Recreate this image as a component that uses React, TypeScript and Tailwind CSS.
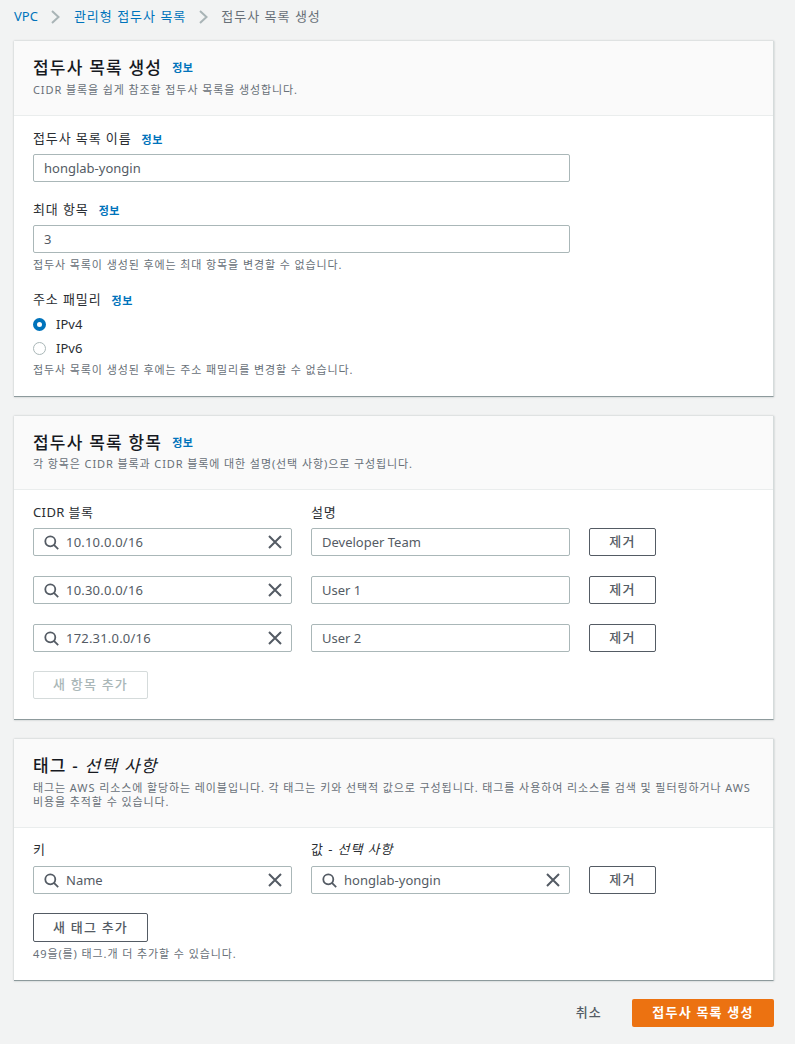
import React from "react";

const font = { fontFamily: '"Noto Sans", "Noto Sans CJK KR", sans-serif' };

function Info({ className = "" }: { className?: string }) {
  return <span className={`text-[11px] font-bold text-[#0073bb] leading-none tracking-[0.5px] ${className}`}>정보</span>;
}

function SearchIcon() {
  return (
    <svg width="15" height="15" viewBox="0 0 15 15" fill="none" stroke="#545b64" strokeWidth="1.8" className="shrink-0">
      <circle cx="6.3" cy="6.3" r="5" />
      <path d="M9.9 9.9 L14.2 14.2" />
    </svg>
  );
}

function XIcon() {
  return (
    <svg width="14" height="14" viewBox="0 0 14 14" fill="none" stroke="#545b64" strokeWidth="2" className="shrink-0">
      <path d="M1 1 L13 13 M13 1 L1 13" />
    </svg>
  );
}

function Chevron() {
  return (
    <svg width="9" height="14" viewBox="0 0 9 14" fill="none" stroke="#a9b4b6" strokeWidth="2" className="shrink-0">
      <path d="M1 1 L7.5 7 L1 13" />
    </svg>
  );
}

function TextInput({ value, className = "" }: { value: string; className?: string }) {
  return (
    <div className={`h-7 flex items-center border border-[#aab7b8] rounded-[2px] bg-white px-[10px] pt-[1px] text-[13px] text-[#545b64] ${className}`}>
      {value}
    </div>
  );
}

function SearchInput({ value, numeric }: { value: string; numeric?: boolean }) {
  return (
    <div className={`w-[259px] h-7 flex items-center border border-[#aab7b8] rounded-[2px] bg-white pl-[10px] pr-[9px] text-[13px] text-[#545b64] ${numeric ? "tracking-[0.2px]" : ""}`}>
      <SearchIcon />
      <span className="ml-[7px] flex-1 pt-[1px]">{value}</span>
      <XIcon />
    </div>
  );
}

function RemoveButton() {
  return (
    <button className="w-[67px] h-7 border border-[#545b64] rounded-[2px] bg-white text-[13px] font-medium text-[#545b64] tracking-[1.2px] flex items-center justify-center">
      제거
    </button>
  );
}

function CardHeader({ children, sub, tall }: { children: React.ReactNode; sub: React.ReactNode; tall?: boolean }) {
  return (
    <div className="bg-[#fafafa] border-b border-[#eaeded] px-[19px] pt-[15px] pb-[18px]">
      <div className="flex items-center h-[23px] text-[17px] font-medium text-[#16191f] tracking-[1.2px] leading-none">{children}</div>
      <div className={`${tall ? "mt-[4px]" : "mt-[3px]"} text-[11px] leading-[14px] text-[#687078] tracking-[0.9px]`}>{sub}</div>
    </div>
  );
}

function Card({ children }: { children: React.ReactNode }) {
  return (
    <section className="ml-[14px] w-[760px] bg-white border-r border-[#d5dbdb] border-b border-b-[#8d9a9c] shadow-[0_0_2px_rgba(0,28,36,0.25)]">
      {children}
    </section>
  );
}

function Label({ children }: { children: React.ReactNode }) {
  return <div className="flex items-center h-[20px] text-[13px] text-[#2a2e33] tracking-[0.9px]">{children}</div>;
}

function Hint({ children }: { children: React.ReactNode }) {
  return <div className="text-[11px] leading-[14px] text-[#687078] tracking-[0.9px]">{children}</div>;
}

function Radio({ checked, label }: { checked?: boolean; label: string }) {
  return (
    <div className="flex items-center h-[24px]">
      {checked ? (
        <span className="w-[13px] h-[13px] rounded-full border-[4px] border-[#0073bb] bg-white" />
      ) : (
        <span className="w-[13px] h-[13px] rounded-full border border-[#aab7b8] bg-white" />
      )}
      <span className="ml-[10px] pt-[1px] text-[13px] text-[#2a2e33]">{label}</span>
    </div>
  );
}

export default function App() {
  return (
    <div style={font} className="w-[795px] h-[1044px] overflow-hidden bg-[#f2f3f3]">
      <nav className="h-[41px] pl-[14px] pb-[8px] flex items-center text-[13px] tracking-[1px]">
        <span className="text-[#0073bb] tracking-normal">VPC</span>
        <span className="ml-[13px] mr-[14px]"><Chevron /></span>
        <span className="text-[#0073bb]">관리형 접두사 목록</span>
        <span className="ml-[13px] mr-[13px]"><Chevron /></span>
        <span className="text-[#687078]">접두사 목록 생성</span>
      </nav>

      <Card>
        <CardHeader tall sub="CIDR 블록을 쉽게 참조할 접두사 목록을 생성합니다.">
          접두사 목록 생성 <Info className="ml-[10px]" />
        </CardHeader>
        <div className="px-[19px] pt-[13px] pb-[19px]">
          <Label>접두사 목록 이름 <Info className="ml-[10px]" /></Label>
          <TextInput value="honglab-yongin" className="w-[537px] mt-[5px]" />
          <div className="mt-[18px]"><Label>최대 항목 <Info className="ml-[10px]" /></Label></div>
          <TextInput value="3" className="w-[537px] mt-[5px]" />
          <div className="mt-[5px]"><Hint>접두사 목록이 생성된 후에는 최대 항목을 변경할 수 없습니다.</Hint></div>
          <div className="mt-[18px]"><Label>주소 패밀리 <Info className="ml-[10px]" /></Label></div>
          <div className="mt-[2px]">
            <Radio checked label="IPv4" />
            <Radio label="IPv6" />
          </div>
          <div className="mt-[3px]"><Hint>접두사 목록이 생성된 후에는 주소 패밀리를 변경할 수 없습니다.</Hint></div>
        </div>
      </Card>

      <div className="h-[19px]" />

      <Card>
        <CardHeader sub="각 항목은 CIDR 블록과 CIDR 블록에 대한 설명(선택 사항)으로 구성됩니다.">
          접두사 목록 항목 <Info className="ml-[10px]" />
        </CardHeader>
        <div className="px-[19px] pt-[13px] pb-[20px]">
          <div className="flex gap-[19px] h-[25px]">
            <div className="w-[259px]"><Label><span className="tracking-[0.4px]">CIDR 블록</span></Label></div>
            <Label>설명</Label>
          </div>
          <div className="flex flex-col gap-[20px]">
            {[
              ["10.10.0.0/16", "Developer Team"],
              ["10.30.0.0/16", "User 1"],
              ["172.31.0.0/16", "User 2"],
            ].map(([cidr, desc]) => (
              <div key={cidr} className="flex gap-[19px]">
                <SearchInput value={cidr} numeric />
                <TextInput value={desc} className="w-[259px]" />
                <RemoveButton />
              </div>
            ))}
          </div>
          <button className="mt-[19px] w-[115px] h-7 border border-[#d5dbdb] rounded-[2px] bg-white text-[13px] font-medium text-[#aab7b8] tracking-[1.2px] flex items-center justify-center">
            새 항목 추가
          </button>
        </div>
      </Card>

      <div className="h-[19px]" />

      <Card>
        <CardHeader
          tall
          sub={
            <>
              태그는 AWS 리소스에 할당하는 레이블입니다. 각 태그는 키와 선택적 값으로 구성됩니다. 태그를 사용하여 리소스를 검색 및 필터링하거나 AWS
              <br />
              비용을 추적할 수 있습니다.
            </>
          }
        >
          태그 -&nbsp;<i className="font-normal">선택 사항</i>
        </CardHeader>
        <div className="px-[19px] pt-[12px] pb-[19px]">
          <div className="flex gap-[19px] h-[26px]">
            <div className="w-[259px]"><Label>키</Label></div>
            <Label><span>값 - <i>선택 사항</i></span></Label>
          </div>
          <div className="flex gap-[19px]">
            <SearchInput value="Name" />
            <SearchInput value="honglab-yongin" />
            <RemoveButton />
          </div>
          <button className="mt-[19px] w-[115px] h-[29px] border border-[#545b64] rounded-[2px] bg-white text-[13px] font-medium text-[#545b64] tracking-[1.2px] flex items-center justify-center">
            새 태그 추가
          </button>
          <div className="mt-[5px]"><Hint>49을(를) 태그.개 더 추가할 수 있습니다.</Hint></div>
        </div>
      </Card>

      <div className="mt-[18px] ml-[14px] w-[760px] flex items-center justify-end">
        <span className="text-[13px] font-medium text-[#545b64] tracking-[1.2px]">취소</span>
        <button className="ml-[30px] w-[142px] h-7 rounded-[2px] bg-[#ec7211] text-white text-[13px] font-bold tracking-[1.2px] flex items-center justify-center">
          접두사 목록 생성
        </button>
      </div>
    </div>
  );
}
